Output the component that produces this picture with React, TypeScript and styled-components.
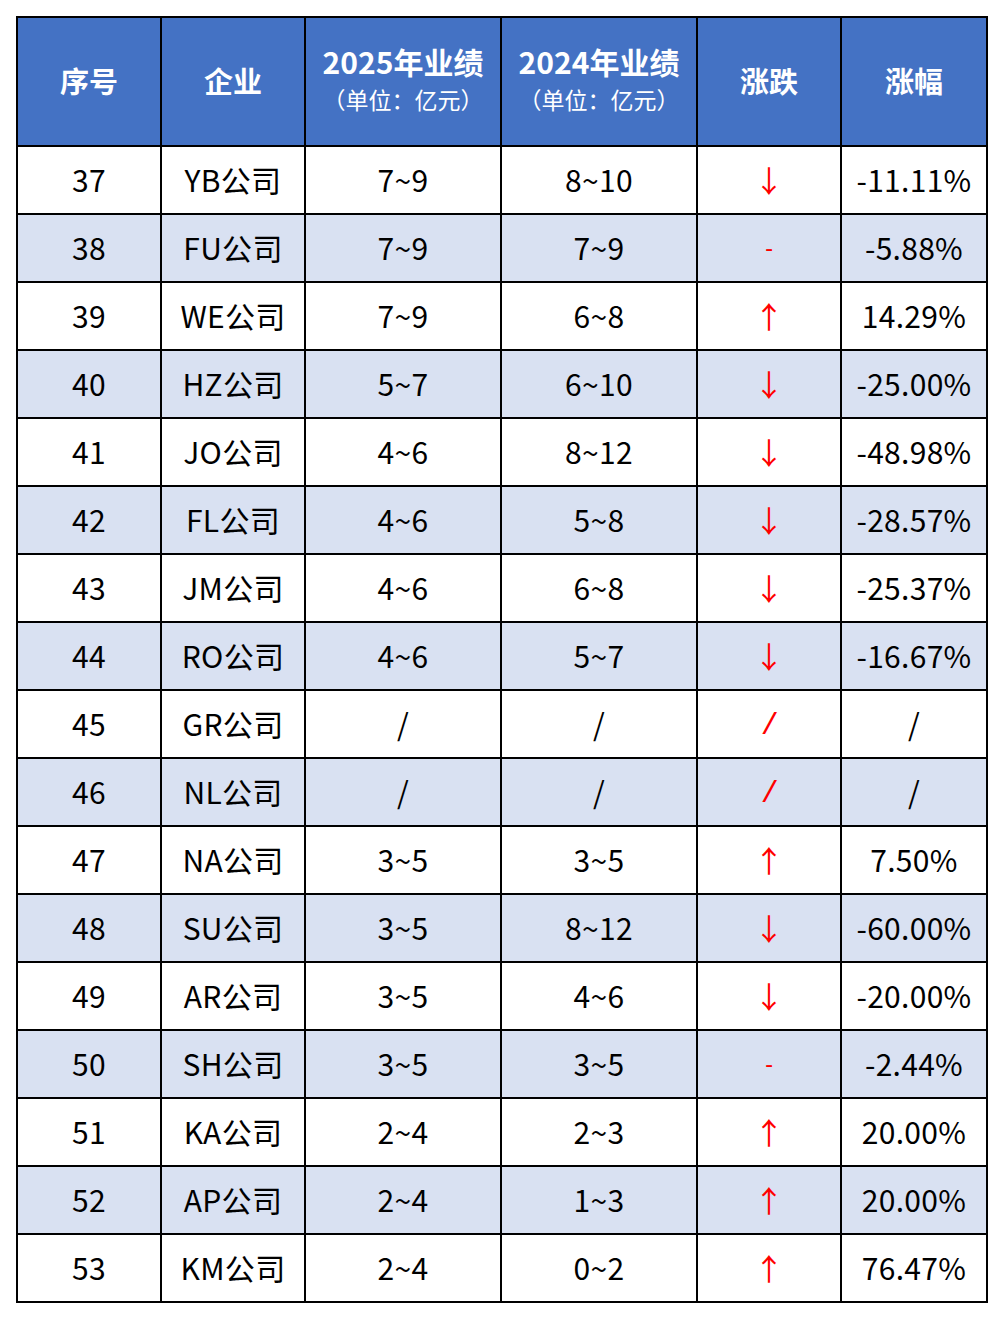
import styled, { createGlobalStyle } from "styled-components";

const GlobalStyle = createGlobalStyle`
  html, body {
    margin: 0;
    padding: 0;
    background: #ffffff;
  }
  body {
    font-family: "Noto Sans CJK SC", "Noto Sans", sans-serif;
  }
`;

type Trend = "up" | "down" | "flat" | "none";

interface Row {
  id: number;
  name: string;
  y2025: string;
  y2024: string;
  trend: Trend;
  change: string;
}

const rows: Row[] = [
  { id: 37, name: "YB公司", y2025: "7~9", y2024: "8~10", trend: "down", change: "-11.11%" },
  { id: 38, name: "FU公司", y2025: "7~9", y2024: "7~9", trend: "flat", change: "-5.88%" },
  { id: 39, name: "WE公司", y2025: "7~9", y2024: "6~8", trend: "up", change: "14.29%" },
  { id: 40, name: "HZ公司", y2025: "5~7", y2024: "6~10", trend: "down", change: "-25.00%" },
  { id: 41, name: "JO公司", y2025: "4~6", y2024: "8~12", trend: "down", change: "-48.98%" },
  { id: 42, name: "FL公司", y2025: "4~6", y2024: "5~8", trend: "down", change: "-28.57%" },
  { id: 43, name: "JM公司", y2025: "4~6", y2024: "6~8", trend: "down", change: "-25.37%" },
  { id: 44, name: "RO公司", y2025: "4~6", y2024: "5~7", trend: "down", change: "-16.67%" },
  { id: 45, name: "GR公司", y2025: "/", y2024: "/", trend: "none", change: "/" },
  { id: 46, name: "NL公司", y2025: "/", y2024: "/", trend: "none", change: "/" },
  { id: 47, name: "NA公司", y2025: "3~5", y2024: "3~5", trend: "up", change: "7.50%" },
  { id: 48, name: "SU公司", y2025: "3~5", y2024: "8~12", trend: "down", change: "-60.00%" },
  { id: 49, name: "AR公司", y2025: "3~5", y2024: "4~6", trend: "down", change: "-20.00%" },
  { id: 50, name: "SH公司", y2025: "3~5", y2024: "3~5", trend: "flat", change: "-2.44%" },
  { id: 51, name: "KA公司", y2025: "2~4", y2024: "2~3", trend: "up", change: "20.00%" },
  { id: 52, name: "AP公司", y2025: "2~4", y2024: "1~3", trend: "up", change: "20.00%" },
  { id: 53, name: "KM公司", y2025: "2~4", y2024: "0~2", trend: "up", change: "76.47%" },
];

const trendGlyph: Record<Trend, string> = {
  up: "↑",
  down: "↓",
  flat: "-",
  none: "/",
};

const colWidths = [144, 144, 196, 196, 144, 146];

export default function App() {
  return (
    <>
      <GlobalStyle />
      <Page>
        <Table>
          <colgroup>
            {colWidths.map((w, i) => (
              <col key={i} style={{ width: w }} />
            ))}
          </colgroup>
          <thead>
            <tr>
              <HeadCell>序号</HeadCell>
              <HeadCell>企业</HeadCell>
              <HeadCell>
                <Title>2025年业绩</Title>
                <Unit>（单位：亿元）</Unit>
              </HeadCell>
              <HeadCell>
                <Title>2024年业绩</Title>
                <Unit>（单位：亿元）</Unit>
              </HeadCell>
              <HeadCell>涨跌</HeadCell>
              <HeadCell>涨幅</HeadCell>
            </tr>
          </thead>
          <tbody>
            {rows.map((r, i) => (
              <BodyRow key={r.id} $shaded={i % 2 === 1}>
                <Cell>{r.id}</Cell>
                <Cell>{r.name}</Cell>
                <Cell>{r.y2025}</Cell>
                <Cell>{r.y2024}</Cell>
                <TrendCell $trend={r.trend}>{trendGlyph[r.trend]}</TrendCell>
                <Cell>{r.change}</Cell>
              </BodyRow>
            ))}
          </tbody>
        </Table>
      </Page>
    </>
  );
}

const Page = styled.div`
  padding: 16px;
  width: 1002px;
  box-sizing: border-box;
`;

const Table = styled.table`
  width: 970px;
  table-layout: fixed;
  border-collapse: collapse;
  border: 2px solid #000;
`;

const HeadCell = styled.th`
  height: 123px;
  padding: 0 0 4px;
  background: #4472c4;
  color: #ffffff;
  border: 2px solid #000;
  font-size: 29px;
  font-weight: 700;
  line-height: 38px;
  text-align: center;
  vertical-align: middle;
`;

const Title = styled.div`
  font-size: 30px;
  font-weight: 700;
  line-height: 38px;
  white-space: nowrap;
`;

const Unit = styled.div`
  font-size: 23px;
  font-weight: 400;
  line-height: 38px;
  white-space: nowrap;
`;

const BodyRow = styled.tr<{ $shaded: boolean }>`
  background: ${(p) => (p.$shaded ? "#d9e1f2" : "#ffffff")};
`;

const Cell = styled.td`
  height: 63px;
  padding: 0 0 3px;
  border: 2px solid #000;
  color: #000;
  font-size: 30px;
  line-height: 36px;
  text-align: center;
  vertical-align: middle;
  letter-spacing: 0.3px;
`;

const TrendCell = styled(Cell)<{ $trend: Trend }>`
  color: #ff0000;
  letter-spacing: 0;
  font-family: ${(p) =>
    p.$trend === "up" || p.$trend === "down"
      ? '"Noto Sans CJK SC", sans-serif'
      : '"Noto Sans", sans-serif'};
  font-size: ${(p) => (p.$trend === "flat" ? "24px" : "30px")};
  font-style: ${(p) => (p.$trend === "none" ? "italic" : "normal")};
`;
